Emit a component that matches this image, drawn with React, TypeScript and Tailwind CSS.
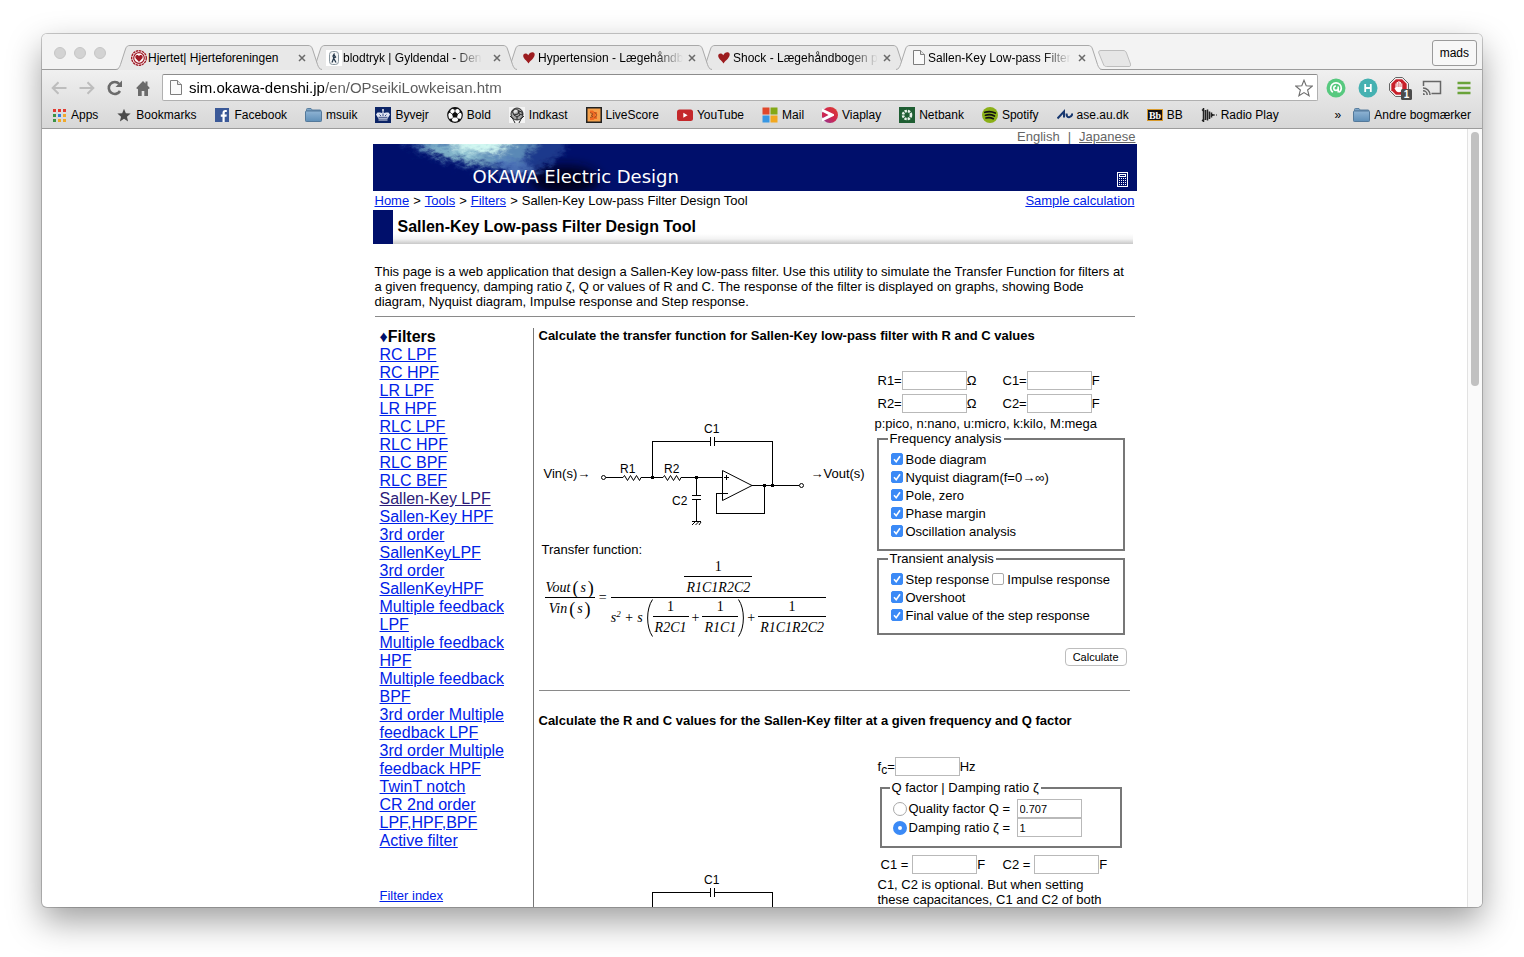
import React from "react";

const SANS = "font-['Liberation_Sans',Arial,sans-serif]";

/* ---------- small icons ---------- */

function PageIcon() {
  return (
    <svg width="12" height="15" viewBox="0 0 12 15" className="shrink-0">
      <path d="M.5.5h7l4 4v10H.5z" fill="#fafafa" stroke="#7d7d7d" />
      <path d="M7.500.5v4h4" fill="#e4e4e4" stroke="#7d7d7d" />
    </svg>
  );
}

function HeartRings() {
  return (
    <svg width="16" height="16" viewBox="0 0 16 16" className="shrink-0">
      <circle cx="8" cy="8" r="7.300" fill="#fff" stroke="#a01c28" strokeWidth="1.400" strokeDasharray="2.500 .6" />
      <circle cx="8" cy="8" r="5.300" fill="none" stroke="#a01c28" strokeWidth="1.200" />
      <path d="M8 12 4.600 8.200C3.700 6.600 4.700 5 6.100 5 7 5 7.700 5.600 8 6.200 8.300 5.600 9 5 9.900 5c1.400 0 2.400 1.600 1.500 3.200z" fill="#a01c28" />
    </svg>
  );
}

function GyldendalIcon() {
  return (
    <svg width="16" height="16" viewBox="0 0 16 16" className="shrink-0">
      <rect width="16" height="16" fill="#fff" />
      <rect x="3.500" y="1.500" width="9" height="13" rx="3" fill="#f3f5f6" stroke="#8a979f" />
      <path d="M8.500 3.500 7 6l.8 2L6 12.500M7.500 8l2.500 4.500M8 5l1.500 2-2 1.500" stroke="#26384a" strokeWidth="1.300" fill="none" />
    </svg>
  );
}

function RedHeart() {
  return (
    <svg width="14" height="14" viewBox="0 0 14 14" className="shrink-0">
      <path d="M6.500 12.500C4.500 9.500 1 7.500 1.200 4.600 1.400 2.300 4.800 1.700 6.300 4.300 7.300 1.800 9.800.8 11.500 1.600c2 1 1.300 4-.7 6.200-1.600 1.700-3.300 3-4.300 4.700z" fill="#9c1c1f" />
    </svg>
  );
}

function FolderIcon() {
  return (
    <svg width="17" height="14" viewBox="0 0 17 14" className="shrink-0">
      <defs>
        <linearGradient id="folder" x1="0" y1="0" x2="0" y2="1">
          <stop offset="0" stopColor="#8fb4d4" />
          <stop offset="1" stopColor="#5f8fb8" />
        </linearGradient>
      </defs>
      <path d="M1.500 3V1.500a1 1 0 0 1 1-1h3.500l1.200 1.500H15a1 1 0 0 1 1 1z" fill="#7ea6c8" stroke="#5b7f9f" />
      <rect x=".5" y="3" width="16" height="10.500" rx=".8" fill="url(#folder)" stroke="#54799a" />
    </svg>
  );
}

function AppsIcon() {
  const colors = ["#e23a30", "#e23a30", "#e23a30", "#3c9445", "#2f7de0", "#f0a92c", "#3c9445", "#f0a92c", "#f0a92c"];
  return (
    <svg width="13" height="13" viewBox="0 0 13 13" className="shrink-0">
      {colors.map((c, i) => (
        <rect key={i} x={(i % 3) * 5} y={Math.floor(i / 3) * 5} width="3" height="3" fill={c} />
      ))}
    </svg>
  );
}

function Svg16({ children }: { children: React.ReactNode }) {
  return (
    <svg width="16" height="16" viewBox="0 0 16 16" className="shrink-0">
      {children}
    </svg>
  );
}

const icons = {
  star: (
    <svg width="14" height="14" viewBox="0 0 16 16" className="shrink-0">
      <path d="M8 .8l2.100 5.100 5.500.4-4.200 3.600 1.300 5.400L8 12.400l-4.700 2.900 1.300-5.400L.4 6.300l5.500-.4z" fill="#4b4b4b" />
    </svg>
  ),
  facebook: (
    <Svg16>
      <rect x="1" y="1" width="14" height="14" fill="#3b5998" />
      <path d="M8.500 15V9.700H6.800V7.600h1.700V6c0-1.900 1-2.900 2.800-2.900h1.500v2h-1.100c-.8 0-1 .4-1 1.100v1.400h2.100l-.3 2.100h-1.800V15z" fill="#fff" />
    </Svg16>
  ),
  byvejr: (
    <Svg16>
      <rect width="16" height="16" fill="#0c2466" />
      <path d="M3.500 11.800 1 7.500l1.500-2L5 5.500 7 6l1-1.500L9 6l2-.5h2.500l1.500 2-2.500 4.300z" fill="#dfe4f2" />
      <path d="M3.500 10.300h9M4.500 7.500l1.500 1.500M8 6.500v2.500M11.500 7.500 10 9" stroke="#0c2466" strokeWidth=".8" />
      <path d="M8 2v3M7 3h2M3.500 13h9" stroke="#fff" strokeWidth=".9" />
    </Svg16>
  ),
  bold: (
    <Svg16>
      <circle cx="8" cy="8" r="7.300" fill="#fff" stroke="#111" strokeWidth="1.200" />
      <path d="M8 4.800 11 7 9.900 10.600H6.100L5 7zM4.500 1.300 8 3l3.500-1.700L8 .5zM.6 7 3.200 5.500 3.600 2.300 1 5zM15.400 7l-2.600-1.500-.4-3.200L15 5zM1.700 12l3-.4 1 3.600-2.200-.7zM14.300 12l-3-.4-1 3.600 2.200-.7z" fill="#111" />
      <path d="M8 2.800v2.400M3 5.200l2.300 2M13 5.200l-2.300 2M4.500 12.100l1.800-1.700M11.500 12.100 9.700 10.400" stroke="#111" strokeWidth=".7" />
    </Svg16>
  ),
  indkast: (
    <Svg16>
      <rect width="16" height="16" fill="#f4f4f4" />
      <circle cx="8" cy="7" r="6" fill="#a5a5a5" stroke="#333" />
      <path d="M3 4l4-2 3 2-1 3-4 1zM10 4l3 1 .5 3-3.500-1zM5 8l3 2 3-2M8 10v3M1 9l3 3 2 4M15 9l-3 3-2 4" stroke="#2b2b2b" strokeWidth="1" fill="none" />
      <path d="M5 3.500l2-1 1.500 1L7.500 5.500 5 6z" fill="#e6e6e6" />
    </Svg16>
  ),
  livescore: (
    <Svg16>
      <rect width="16" height="16" fill="#222" />
      <rect x="1.500" y="1.500" width="13" height="13" fill="#f5a04a" />
      <path d="M4 3.500h3l1.500 1.500H11v2l-2 1 2 1.500v2.500H8.500L7.500 13H4v-2.500l3-1-2-1.500 2-1-3-1.500z" fill="#ee6a24" />
      <path d="M4 5.500l3 1.500-2 1.500 2 1-3 1M8.500 5l2.500 3-2.500 3" stroke="#6e3216" strokeWidth=".6" fill="none" />
    </Svg16>
  ),
  youtube: (
    <Svg16>
      <rect y="2.500" width="16" height="11.500" rx="2.500" fill="#c4282b" />
      <path d="M6.300 5.700v5l4.300-2.500z" fill="#fff" />
    </Svg16>
  ),
  mail: (
    <Svg16>
      <path d="M.5.500h7v7h-7z" fill="#e0482c" />
      <path d="M8.500.5h7v7h-7z" fill="#83a816" />
      <path d="M.5 8.500h7v7h-7z" fill="#3897e3" />
      <path d="M8.500 8.500h7v7h-7z" fill="#f2a71f" />
    </Svg16>
  ),
  viaplay: (
    <Svg16>
      <defs>
        <linearGradient id="via" x1="0" y1="1" x2="1" y2="0">
          <stop offset="0" stopColor="#8c3a9a" />
          <stop offset=".5" stopColor="#cf2750" />
          <stop offset="1" stopColor="#e0402c" />
        </linearGradient>
      </defs>
      <circle cx="8" cy="8" r="8" fill="url(#via)" />
      <path d="M0 1.500V4.500L6.500 8 0 11.500v3L12 8.800V7.200zM0 6v4l3-2z" fill="#fff" />
      <path d="M0 5.500 5.500 8 0 10.500z" fill="#cf2750" />
    </Svg16>
  ),
  netbank: (
    <Svg16>
      <rect width="16" height="16" fill="#1f5e33" />
      <circle cx="8" cy="8" r="4" fill="none" stroke="#e8f3ea" strokeWidth="2.600" strokeDasharray="2.300 .9" />
    </Svg16>
  ),
  spotify: (
    <Svg16>
      <circle cx="8" cy="8" r="8" fill="#8bb018" />
      <path d="M2.800 5.300c3.500-1.100 7.500-.8 10.500.8M3.500 8.200c3-.9 6.200-.6 8.900.8M4 11c2.600-.7 5-.4 7.300.7" stroke="#111" strokeWidth="1.700" strokeLinecap="round" fill="none" />
    </Svg16>
  ),
  au: (
    <Svg16>
      <path d="M.5 11.500 7 4.500v6M9.500 6.500c0 5 5 5 6 0" stroke="#17376f" strokeWidth="2" fill="none" />
    </Svg16>
  ),
  bb: (
    <svg width="16" height="12" viewBox="0 0 16 12" className="shrink-0">
      <rect x=".5" y=".5" width="15" height="11" fill="#111" stroke="#d99a2b" />
      <text x="8" y="9.500" textAnchor="middle" fontSize="10" fontWeight="700" fontFamily="Liberation Serif, serif" fill="#fff">Bb</text>
    </svg>
  ),
  radio: (
    <Svg16>
      <path d="M2.500 1v14M4.500 3v10M6.500 2.500v11M8.500 4.500v7.500M10.500 5.500v5M12 7v2" stroke="#222" strokeWidth="1.500" />
      <path d="M1 2.500l2 2M1 14l2-2M13 8h1M15 8h1" stroke="#222" strokeWidth="1.200" />
    </Svg16>
  ),
};

/* ---------- browser chrome ---------- */

function TabShape({ active }: { active?: boolean }) {
  return (
    <svg className="absolute inset-0 h-full w-full" viewBox="0 0 206 25" preserveAspectRatio="none">
      <path d="M0 25C3 24.500 3.500 22 4.500 19.500L9.500 4C10.500 1 12 .5 14 .5H192C194 .5 195.500 1 196.500 4L201.500 19.500C202.500 22 203 24.500 206 25Z" fill={active ? "#f1f1f1" : "#e8e8e8"} />
      <path d="M0 24.500C3 24 3.500 22 4.500 19.500L9.500 4C10.500 1 12 .5 14 .5H192C194 .5 195.500 1 196.500 4L201.500 19.500C202.500 22 203 24 206 24.500" fill="none" stroke="#a9a9a9" />
    </svg>
  );
}

const fade = "mask-r-from-80% mask-r-to-100%";

const tabs = [
  { title: "Hjertet| Hjerteforeningen", icon: <HeartRings />, z: "z-[4]", mask: "" },
  { title: "blodtryk | Gyldendal - Den", icon: <GyldendalIcon />, z: "z-[3]", mask: fade },
  { title: "Hypertension - Lægehåndb", icon: <RedHeart />, z: "z-[2]", mask: fade },
  { title: "Shock - Lægehåndbogen p", icon: <RedHeart />, z: "z-[1]", mask: fade },
  { title: "Sallen-Key Low-pass Filter", icon: <PageIcon />, z: "z-[5]", mask: fade, active: true },
];

function TabStrip() {
  return (
    <div className="flex h-9 shrink-0 items-end border-b border-[#9c9c9c] bg-[#f3f3f3] pr-[5px] pl-3">
      <div className="flex gap-2 self-start pt-[13px]">
        {["Close", "Minimise", "Zoom"].map((n) => (
          <button key={n} aria-label={n} className="size-3 rounded-full border border-[#c6c6c6] bg-[#d3d3d3]" />
        ))}
      </div>
      <div className="-mb-px ml-[10px] flex">
        {tabs.map((t) => (
          <div key={t.title} className={`relative -mr-[11px] flex h-[25px] w-[206px] items-center pr-4 pl-[15px] ${t.z}`}>
            <TabShape active={t.active} />
            <span className="relative flex w-4 shrink-0 justify-center">{t.icon}</span>
            <span className="relative ml-px flex min-w-0 flex-1">
              <span className={`text-xs whitespace-nowrap ${t.mask}`}>{t.title}</span>
            </span>
            <button aria-label="Close tab" className="relative shrink-0">
              <svg width="8" height="8" viewBox="0 0 8 8">
                <path d="M1 1l6 6M7 1 1 7" stroke="#6a6a6a" strokeWidth="1.500" />
              </svg>
            </button>
          </div>
        ))}
      </div>
      <button aria-label="New tab" className="mb-[2px] ml-[7px]">
        <svg width="33" height="17" viewBox="0 0 33 17">
          <path d="M3 .5h22c2 0 2.500.5 3.500 2.500l4 11c.5 1.500 0 2.500-1.500 2.500H8.500c-1.500 0-2.500-.5-3.200-2.500L.8 3C.3 1.500 1 .5 3 .5z" fill="#e6e6e6" stroke="#bdbdbd" />
        </svg>
      </button>
      <button className="mb-[3px] ml-auto h-[26px] rounded-[3px] border border-[#9a9a9a] bg-[#f7f7f7] px-[7px] text-xs">mads</button>
    </div>
  );
}

function Toolbar() {
  return (
    <div className="flex h-[35px] shrink-0 items-center pr-[2px] pl-[9px]">
      <button aria-label="Back" className="mr-3">
        <svg width="16" height="14" viewBox="0 0 16 14"><path d="M15.500 7H2M7.500 1.200 1.700 7l5.800 5.800" fill="none" stroke="#bdbdbd" strokeWidth="2" /></svg>
      </button>
      <button aria-label="Forward" className="mr-3">
        <svg width="16" height="14" viewBox="0 0 16 14"><path d="M.5 7H14M8.500 1.200 14.300 7l-5.800 5.800" fill="none" stroke="#bdbdbd" strokeWidth="2" /></svg>
      </button>
      <button aria-label="Reload" className="mr-[13px]">
        <svg width="16" height="16" viewBox="0 0 16 16"><path d="M13 11A6 6 0 1 1 12.300 4" fill="none" stroke="#6b6b6b" strokeWidth="2.600" /><path d="M15 .5V7H8.500z" fill="#6b6b6b" /></svg>
      </button>
      <button aria-label="Home" className="mr-3">
        <svg width="14" height="16" viewBox="0 0 14 16"><path d="M7 1 .2 8l1.200 1.200.6-.6V16h3.700v-5h2.600v5H12V8.600l.6.600L13.800 8 11.500 5.600V1.500h-2v2z" fill="#6b6b6b" /></svg>
      </button>
      <div className="flex h-[27px] min-w-0 flex-1 items-center rounded-[2px] border border-[#b0b0b0] border-t-[#8c8c8c] bg-white pr-1 pl-[7px]">
        <PageIcon />
        <input
          aria-label="Address"
          defaultValue="sim.okawa-denshi.jp/en/OPseikiLowkeisan.htm"
          className="mt-px ml-[7px] min-w-0 flex-1 bg-[linear-gradient(90deg,#000_135px,#5a5a5a_135px)] bg-clip-text text-[15px] text-transparent outline-none"
        />
        <button aria-label="Bookmark this page">
          <svg width="18" height="18" viewBox="0 0 18 18"><path d="M9 1.200l2.200 5.500 6 .4-4.600 3.900 1.500 5.800L9 13.600l-5.100 3.200 1.500-5.800L.8 7.100l6-.4z" fill="#fff" stroke="#6f6f6f" strokeWidth="1.100" /></svg>
        </button>
      </div>
      <div className="flex items-center pl-[2px]">
        <button aria-label="Assistant extension" className="w-8"><svg className="mx-auto block" width="20" height="20" viewBox="0 0 20 20"><circle cx="10" cy="10" r="9.500" fill="#57c97f" /><path d="M6.800 14.300A5.300 5.300 0 1 1 13.200 14.300" fill="none" stroke="#fff" strokeWidth="1.700" /><path d="M10 8a2.200 2.200 0 1 0 2.200 2.200V8.500M12.200 10v4.500" fill="none" stroke="#fff" strokeWidth="1.600" /></svg></button>
        <button aria-label="H extension" className="w-8"><svg className="mx-auto block" width="20" height="20" viewBox="0 0 20 20"><circle cx="10" cy="10" r="9.500" fill="#45b1b1" /><path d="M7.200 6v8M12.800 6v8M7.200 10h5.600" stroke="#fff" strokeWidth="1.800" /></svg></button>
        <button aria-label="Ad blocker" className="w-8">
          <svg className="mx-auto block" width="24" height="24" viewBox="0 0 24 24">
            <path d="M6.500.6h7L19.400 6.500v7L13.500 19.400h-7L.6 13.500v-7z" transform="translate(1 1)" fill="#fff" stroke="#555" />
            <path d="M7.300 2.800h6.400L18.200 7.300v6.400L13.700 18.200H7.300L2.800 13.700V7.300z" transform="translate(.5 .5)" fill="#c8202a" />
            <path d="M7.500 11.500V7.500h1.200V6h1.500V5.200h1.400V6H13v1.500h1.300v5.200c0 2-1.300 3.500-3.300 3.500-2.300 0-3-1.500-4.500-4l1-1z" fill="#fff" />
            <path d="M8.900 7.500v3.500M10.400 6v5M11.900 6.500V11M13.100 8v3" stroke="#c8202a" strokeWidth=".5" />
            <rect x="13" y="13" width="11" height="11" rx="1.500" fill="#4b4b4b" />
            <text x="18.500" y="22" textAnchor="middle" fontSize="10" fontWeight="700" fill="#fff" fontFamily="Liberation Sans, sans-serif">1</text>
          </svg>
        </button>
        <button aria-label="Cast" className="w-8"><svg className="mx-auto block" width="20" height="16" viewBox="0 0 20 16"><path d="M1.500 6V1.500h17v12H9.500" fill="none" stroke="#666" strokeWidth="1.500" /><path d="M1 8a7 7 0 0 1 7 7M1 10.800A4.200 4.200 0 0 1 5.200 15" fill="none" stroke="#666" strokeWidth="1.500" /><path d="M1 13v2h2a2 2 0 0 0-2-2z" fill="#666" /></svg></button>
        <button aria-label="Menu" className="w-8"><svg className="mx-auto block" width="14" height="14" viewBox="0 0 14 14"><path d="M.5 2h13M.5 7h13M.5 12h13" stroke="#6aa33a" strokeWidth="2.600" /></svg></button>
      </div>
    </div>
  );
}

const bookmarks = [
  { name: "Bookmarks", icon: icons.star },
  { name: "Facebook", icon: icons.facebook },
  { name: "msuik", icon: <FolderIcon /> },
  { name: "Byvejr", icon: icons.byvejr },
  { name: "Bold", icon: icons.bold },
  { name: "Indkast", icon: icons.indkast },
  { name: "LiveScore", icon: icons.livescore },
  { name: "YouTube", icon: icons.youtube },
  { name: "Mail", icon: icons.mail },
  { name: "Viaplay", icon: icons.viaplay },
  { name: "Netbank", icon: icons.netbank },
  { name: "Spotify", icon: icons.spotify },
  { name: "ase.au.dk", icon: icons.au },
  { name: "BB", icon: icons.bb },
  { name: "Radio Play", icon: icons.radio },
];

function BookmarkBar() {
  return (
    <nav className="flex h-[23px] shrink-0 items-center pr-[11px] pb-[3px] pl-[9px] text-xs whitespace-nowrap">
      <div className="flex gap-[18px]">
        {[{ name: "Apps", icon: <AppsIcon /> }, ...bookmarks].map((b) => (
          <a key={b.name} href="#" className="flex items-center gap-1">
            <span className="flex min-w-4 shrink-0 justify-center">{b.icon}</span>
            {b.name}
          </a>
        ))}
      </div>
      <button aria-label="More bookmarks" className="ml-auto">»</button>
      <a href="#" className="ml-3 flex items-center gap-1">
        <FolderIcon />
        Andre bogmærker
      </a>
    </nav>
  );
}

/* ---------- page parts ---------- */

function Link({ children, visited }: { children: React.ReactNode; visited?: boolean }) {
  return (
    <a href="#" className={`underline ${visited ? "text-[#2b1a78]" : "text-[#0021e8]"}`}>
      {children}
    </a>
  );
}

function BannerArt() {
  return (
    <svg className="absolute top-0 left-0 h-full w-[260px]" viewBox="0 0 260 47">
      <defs>
        <filter id="ripple" x="-20%" y="-60%" width="140%" height="220%">
          <feTurbulence type="fractalNoise" baseFrequency=".12 .22" numOctaves="3" seed="4" result="n" />
          <feGaussianBlur in="SourceGraphic" stdDeviation="3" result="b" />
          <feDisplacementMap in="b" in2="n" scale="14" xChannelSelector="R" yChannelSelector="G" />
        </filter>
        <filter id="soft" x="-50%" y="-50%" width="200%" height="200%">
          <feGaussianBlur stdDeviation="6" />
        </filter>
      </defs>
      <ellipse cx="192" cy="36" rx="34" ry="14" fill="#00031c" filter="url(#soft)" />
      <g filter="url(#ripple)">
        <path d="M22-8H190L192 6 180 18 158 30 118 28 80 20 45 8z" fill="#2c509c" opacity=".65" />
        <path d="M35-8H170L150 16 118 20 78 12 50 4z" fill="#6fa3c6" opacity=".75" />
        <path d="M75-8H145L130 7 100 8 85 6z" fill="#d2f8f2" />
        <path d="M50 0 100 10 125 20 95 16 60 8z" fill="#a5dde0" opacity=".8" />
        <path d="M118 12 150 18 165 30 135 32z" fill="#5b86c4" opacity=".7" />
      </g>
    </svg>
  );
}

function Banner() {
  return (
    <div className="relative h-[47px] overflow-hidden bg-[#000f6b]">
      <BannerArt />
      <div className="relative flex h-full items-end justify-between pr-[9px] pl-[100px] text-white">
        <span className="pb-[3px] font-['DejaVu_Sans',sans-serif] text-lg leading-[22px]">OKAWA Electric Design</span>
        <a href="#" aria-label="Calculator" className="pb-1">
          <svg width="11" height="15" viewBox="0 0 11 15" shapeRendering="crispEdges">
            <rect x=".5" y=".5" width="10" height="14" fill="none" stroke="#fff" />
            <rect x="2.500" y="2.500" width="6" height="2" fill="none" stroke="#fff" />
            {[6, 8, 10, 12].map((y) => [2, 4, 6, 8].map((x) => <rect key={`${x}-${y}`} x={x} y={y} width="1" height="1" fill="#fff" />))}
          </svg>
        </a>
      </div>
    </div>
  );
}

function Circuit() {
  return (
    <svg width="206" height="106" viewBox="600 420 206 106" className="shrink-0" fill="none" stroke="#000">
      <g shapeRendering="crispEdges">
        <path d="M606 477.500H623M641 477.500H663M681 477.500H722M752 485.500H799" />
        <path d="M652.500 478V441.500H710.500M714.500 441.500H772.500V486M710.500 437V446M714.500 437V446" />
        <path d="M696.500 478V495.500M692 495.500H701M692 499.500H701M696.500 499.500V521.500M692 521.500H701" />
        <path d="M728 493.500H716.500V513.500H764.500V486M724 477.500H729M726.500 475V480" />
      </g>
      <path d="M623 477.500l1.500-2 3 5 3-5 3 5 3-5 3 5 1.500-3M663 477.500l1.500-2 3 5 3-5 3 5 3-5 3 5 1.500-3" />
      <path d="M722.500 470.500V500.500L752 485.500z" />
      <path d="M692 525l3-3M695.500 525l3-3M699 525l2-3" />
      <circle cx="603.500" cy="477.500" r="2" fill="#fff" />
      <circle cx="801.500" cy="485.500" r="2" fill="#fff" />
      <g fill="#000" stroke="none">
        <rect x="651" y="476" width="3" height="3" />
        <rect x="695" y="476" width="3" height="3" />
        <rect x="763" y="484" width="3" height="3" />
        <rect x="771" y="484" width="3" height="3" />
        <g fontSize="12" fontFamily="Liberation Sans, sans-serif">
          <text x="704" y="433">C1</text>
          <text x="620" y="473">R1</text>
          <text x="664" y="473">R2</text>
          <text x="672" y="505">C2</text>
        </g>
      </g>
    </svg>
  );
}

function CircuitRow() {
  return (
    <div className="flex items-center pl-[5px]">
      <span className="w-14">Vin(s)→</span>
      <Circuit />
      <span className="ml-[5px] whitespace-nowrap">→Vout(s)</span>
    </div>
  );
}

function Frac({ top, bottom }: { top: React.ReactNode; bottom: React.ReactNode }) {
  return (
    <span className="inline-flex flex-col items-center leading-[18px]">
      <span>{top}</span>
      <span className="self-stretch border-t border-black px-[2px] pt-[2px] text-center">{bottom}</span>
    </span>
  );
}

function Paren({ d }: { d: string }) {
  return (
    <svg width="6" height="38" viewBox="0 0 6 38" className="shrink-0">
      <path d={d} fill="none" stroke="#000" />
    </svg>
  );
}

const One = () => <span className="not-italic">1</span>;

function OfS({ name }: { name: string }) {
  return (
    <span className="flex items-center justify-center gap-[2px] px-px">
      {name}
      <span className="text-lg leading-[18px] not-italic">(</span>s<span className="text-lg leading-[18px] not-italic">)</span>
    </span>
  );
}

function TransferFunction() {
  return (
    <div className="flex pl-[6px] font-['Liberation_Serif','Times_New_Roman',serif] text-sm italic">
      <div className="mt-5">
        <Frac top={<OfS name="Vout" />} bottom={<OfS name="Vin" />} />
      </div>
      <span className="mt-[30px] px-1 not-italic">=</span>
      <div className="flex flex-col items-center">
        <Frac top={<One />} bottom="R1C1R2C2" />
        <div className="flex items-center self-stretch border-t border-black">
          <span className="pr-1 whitespace-nowrap">
            s<sup className="text-[9px]">2</sup> + s
          </span>
          <Paren d="M5.500 .5C-1 10-1 28 5.500 37.500" />
          <Frac top={<One />} bottom="R2C1" />
          <span className="px-[3px] not-italic">+</span>
          <Frac top={<One />} bottom="R1C1" />
          <Paren d="M.5 .5C7 10 7 28 .5 37.500" />
          <span className="px-[3px] not-italic">+</span>
          <Frac top={<One />} bottom="R1C1R2C2" />
        </div>
      </div>
    </div>
  );
}

const box = "h-[19px] w-[65px] border border-[#b9b9b9] bg-white px-[2px] text-[11px] outline-none";

function Field({ label, unit, className = "", value }: { label: React.ReactNode; unit?: string; className?: string; value?: string }) {
  return (
    <label className={`flex items-center whitespace-nowrap ${className}`}>
      {label}
      <input type="text" className={box} defaultValue={value} />
      {unit}
    </label>
  );
}

function Check({ label, off }: { label: string; off?: boolean }) {
  return (
    <label className="flex h-[18px] items-center gap-[3px] whitespace-nowrap">
      <span className="relative flex size-3">
        <input type="checkbox" defaultChecked={!off} className="peer size-3 appearance-none rounded-[2px] border border-[#a8a8a8] bg-white checked:border-[#3b8af6] checked:bg-[#3b8af6]" />
        <svg viewBox="0 0 12 12" className="pointer-events-none absolute inset-0 hidden size-3 peer-checked:block">
          <path d="M3 6.300 5.200 8.800 9 3.200" fill="none" stroke="#fff" strokeWidth="1.600" />
        </svg>
      </span>
      {label}
    </label>
  );
}

function Radio({ label, id, on, value }: { label: string; id: string; on?: boolean; value: string }) {
  return (
    <div className="flex h-[19px] items-center whitespace-nowrap">
      <input
        id={id}
        type="radio"
        name="ratio"
        defaultChecked={on}
        className="mr-[2px] size-[14px] appearance-none rounded-full border border-[#a8a8a8] bg-white checked:border-[5px] checked:border-[#3b8af6]"
      />
      <label htmlFor={id} className="w-[108px]">{label}</label>
      <input type="text" aria-label={label} defaultValue={value} className={box} />
    </div>
  );
}

function Group({ legend, className, children }: { legend: string; className: string; children: React.ReactNode }) {
  return (
    <fieldset className={`border-2 border-[#777] ${className}`}>
      <legend className="-ml-[3px] px-[2px] leading-[15px]">{legend}</legend>
      {children}
    </fieldset>
  );
}

const filters: [string, boolean?][] = [
  ["RC LPF"], ["RC HPF"], ["LR LPF"], ["LR HPF"], ["RLC LPF"], ["RLC HPF"], ["RLC BPF"], ["RLC BEF"],
  ["Sallen-Key LPF", true], ["Sallen-Key HPF"], ["3rd order SallenKeyLPF"], ["3rd order SallenKeyHPF"],
  ["Multiple feedback LPF"], ["Multiple feedback HPF"], ["Multiple feedback BPF"],
  ["3rd order Multiple feedback LPF"], ["3rd order Multiple feedback HPF"],
  ["TwinT notch"], ["CR 2nd order LPF,HPF,BPF"], ["Active filter"],
];

function Sidebar() {
  return (
    <aside className="w-[160px] shrink-0 pr-6 pl-[7px]">
      <h2 className="text-base leading-[18px] font-bold"><span className="text-[#000f6b]">♦</span>Filters</h2>
      <ul className="text-base leading-[18px]">
        {filters.map(([name, visited]) => (
          <li key={name}><Link visited={visited}>{name}</Link></li>
        ))}
      </ul>
      <p className="mt-[37px] leading-[18px]"><Link>Filter index</Link></p>
    </aside>
  );
}

function Page() {
  return (
    <div className="mx-auto w-[764px] shrink-0 text-[13px] leading-[15px]">
      <div className="flex justify-end gap-2 pr-px text-[#666]">
        <span>English</span>
        <span>|</span>
        <a href="#" className="underline">Japanese</a>
      </div>
      <Banner />
      <div className="flex justify-between px-[2px] py-[2px]">
        <span className="flex gap-1">
          <Link>Home</Link>
          <span>&gt;</span>
          <Link>Tools</Link>
          <span>&gt;</span>
          <Link>Filters</Link>
          <span>&gt;</span>
          <span>Sallen-Key Low-pass Filter Design Tool</span>
        </span>
        <Link>Sample calculation</Link>
      </div>
      <h1 className="mr-1 flex h-[34px] items-center border-l-[20px] border-[#000f6b] bg-linear-to-t from-[#c8c8c8] via-[#f3f3f3] via-15% to-white to-30% pl-[5px] text-base font-bold">
        Sallen-Key Low-pass Filter Design Tool
      </h1>
      <p className="mt-5 pr-1 pl-[2px]">
        This page is a web application that design a Sallen-Key low-pass filter. Use this utility to simulate the Transfer Function for filters at a given frequency, damping ratio ζ, Q or values of R and C. The response of the filter is displayed on graphs, showing Bode diagram, Nyquist diagram, Impulse response and Step response.
      </p>
      <hr className="mt-[7px] mr-[2px] ml-[2px] border-[#8a8a8a]" />
      <div className="mt-[11px] flex">
        <Sidebar />
        <div className="min-w-0 flex-1 border-l border-[#777] pr-[7px] pl-[5px]">
          <section>
            <h2 className="font-bold">Calculate the transfer function for Sallen-Key low-pass filter with R and C values</h2>
            <div className="flex">
              <div className="w-[336px] shrink-0 pt-[77px]">
                <CircuitRow />
                <p className="mt-4 mb-px pl-[3px]">Transfer function:</p>
                <TransferFunction />
              </div>
              <form className="min-w-0 flex-1 pt-7" onSubmit={(e) => e.preventDefault()}>
                <div className="grid grid-cols-[125px_1fr] gap-y-1 pl-[3px]">
                  <Field label="R1=" unit="Ω" />
                  <Field label="C1=" unit="F" />
                  <Field label="R2=" unit="Ω" />
                  <Field label="C2=" unit="F" />
                </div>
                <p className="mt-[3px] whitespace-nowrap">p:pico, n:nano, u:micro, k:kilo, M:mega</p>
                <Group legend="Frequency analysis" className="mr-[5px] ml-[2px] h-[120px] px-3 pt-1">
                  <Check label="Bode diagram" />
                  <Check label="Nyquist diagram(f=0→∞)" />
                  <Check label="Pole, zero" />
                  <Check label="Phase margin" />
                  <Check label="Oscillation analysis" />
                </Group>
                <Group legend="Transient analysis" className="mr-[5px] ml-[2px] h-[84px] px-3 pt-1">
                  <div className="flex gap-[3px]">
                    <Check label="Step response" />
                    <Check label="Impulse response" off />
                  </div>
                  <Check label="Overshoot" />
                  <Check label="Final value of the step response" />
                </Group>
                <div className="flex justify-end pt-[13px] pr-[3px]">
                  <button className="h-[18px] rounded-[4px] border border-[#bdbdbd] bg-white px-[7px] text-[11px] leading-4">Calculate</button>
                </div>
              </form>
            </div>
          </section>
          <hr className="mt-6 border-[#8a8a8a]" />
          <section className="mt-[22px]">
            <h2 className="font-bold">Calculate the R and C values for the Sallen-Key filter at a given frequency and Q factor</h2>
            <div className="flex">
              <div className="w-[336px] shrink-0 pt-[143px]">
                <CircuitRow />
              </div>
              <form className="min-w-0 flex-1 pt-[29px] pl-[3px]" onSubmit={(e) => e.preventDefault()}>
                <Field label={<span>f<sub className="text-xs">c</sub>=</span>} unit="Hz" />
                <Group legend="Q factor | Damping ratio ζ" className="mt-1 mr-2 ml-[2px] h-[68px] px-[11px] pt-1">
                  <Radio id="q" label="Quality factor Q =" value="0.707" />
                  <Radio id="zeta" label="Damping ratio ζ =" value="1" on />
                </Group>
                <div className="mt-[7px] grid grid-cols-[122px_1fr] pl-[3px]">
                  <Field label={<span className="pr-1">C1 =</span>} unit="F" />
                  <Field label={<span className="pr-1">C2 =</span>} unit="F" />
                </div>
                <p className="mt-[3px] whitespace-nowrap">
                  C1, C2 is optional. But when setting
                  <br />
                  these capacitances, C1 and C2 of both
                </p>
              </form>
            </div>
          </section>
        </div>
      </div>
    </div>
  );
}

export default function App() {
  return (
    <div className={`flex h-screen flex-col bg-white px-[42px] pt-[34px] pb-[50px] text-black ${SANS}`}>
      <div className="flex min-h-0 flex-1 flex-col overflow-hidden rounded-[5px] bg-white shadow-[0_0_0_1px_rgba(0,0,0,0.2),0_14px_34px_rgba(0,0,0,0.38)]">
        <TabStrip />
        <div className="shrink-0 border-b border-[#9c9c9c] bg-linear-to-b from-[#f0f0f0] to-[#d7d7d7]">
          <Toolbar />
          <BookmarkBar />
        </div>
        <div className="flex min-h-0 flex-1">
          <main className="flex min-w-0 flex-1 items-start overflow-hidden">
            <Page />
          </main>
          <div className="w-[15px] shrink-0 border-l border-[#e2e2e2] bg-[#fafafa] px-[3px] pt-[3px]">
            <div className="h-[254px] rounded-full bg-[#c1c1c1]" />
          </div>
        </div>
      </div>
    </div>
  );
}
